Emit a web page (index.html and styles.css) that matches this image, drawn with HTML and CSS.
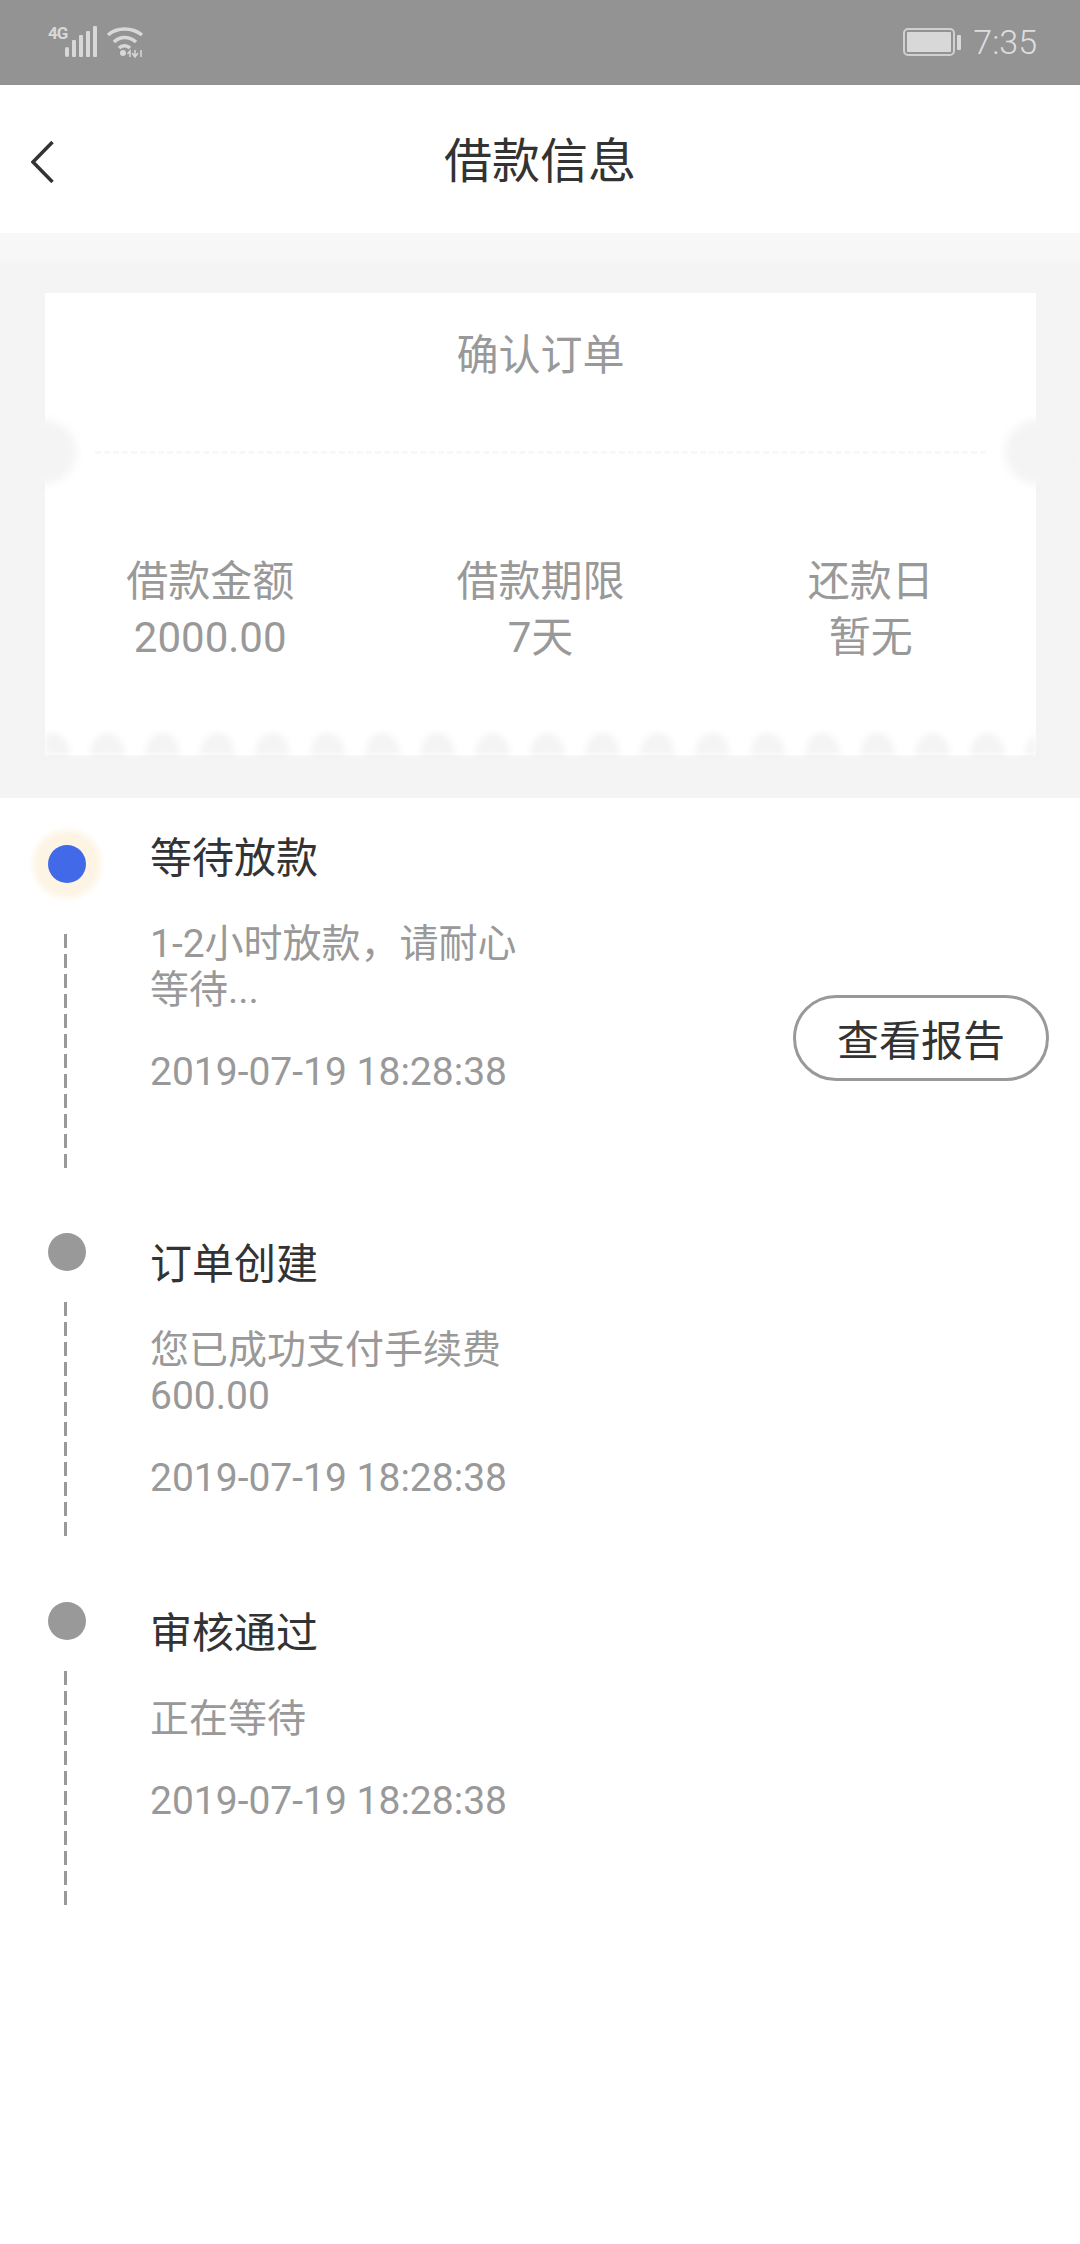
FILE: index.html
```html
<!DOCTYPE html>
<html lang="zh-CN">
<head>
<meta charset="utf-8">
<title>借款信息</title>
<link rel="stylesheet" href="styles.css">
</head>
<body>
<div class="status">
  <div class="status-left">
    <span class="net">4G</span>
    <svg class="signal" width="32" height="31" viewBox="0 0 32 31" aria-hidden="true">
      <rect x="0" y="21" width="4" height="10" rx="2"/>
      <rect x="7" y="14" width="4" height="17" rx="1"/>
      <rect x="14" y="9" width="4" height="22" rx="1"/>
      <rect x="21" y="5" width="4" height="26" rx="1"/>
      <rect x="28" y="0" width="4" height="31" rx="1"/>
    </svg>
    <svg class="wifi" width="38" height="32" viewBox="0 0 38 32" aria-hidden="true">
      <path class="arc" d="M2 9 C11 1 26 1 36 9"/>
      <path class="arc" d="M8 16 C14 10 23 10 30 16"/>
      <path class="arc" d="M13 22 C16 19 21 19 24 22"/>
      <circle class="spot" cx="17" cy="27" r="3"/>
      <path class="thin" d="M24 31 L24 25 L21.500 28 M29 24 L29 30 M26 27 L29 31 L32 27 M35 24 L35 31"/>
    </svg>
  </div>
  <div class="status-right">
    <svg class="battery" width="58" height="28" viewBox="0 0 58 28" aria-hidden="true">
      <rect class="shell" x="1" y="1" width="50" height="26" rx="4"/>
      <rect class="charge" x="4" y="4" width="44" height="20" rx="1"/>
      <rect class="charge" x="54" y="7" width="4" height="15" rx="1"/>
    </svg>
    <span class="clock">7:35</span>
  </div>
</div>

<header class="nav">
  <svg class="back" width="23" height="42" viewBox="0 0 23 42" aria-hidden="true">
    <path d="M21.500 1 L2 21 L21.500 41"/>
  </svg>
  <h1 class="nav-title">借款信息</h1>
</header>

<section class="ticket">
  <div class="ticket-card">
    <h2 class="ticket-title">确认订单</h2>
    <div class="perforation">
      <span class="notch notch-left"></span>
      <span class="perforation-line"></span>
      <span class="notch notch-right"></span>
    </div>
    <div class="facts">
      <div class="fact"><div>借款金额</div><div>2000.00</div></div>
      <div class="fact"><div>借款期限</div><div>7天</div></div>
      <div class="fact"><div>还款日</div><div>暂无</div></div>
    </div>
    <div class="scallops"></div>
  </div>
</section>

<main class="timeline">
  <article class="step step-active">
    <div class="marker">
      <span class="dot"></span>
      <span class="dash"></span>
    </div>
    <div class="step-body">
      <h3 class="step-title">等待放款</h3>
      <p class="step-text">1-2小时放款，请耐心等待...</p>
      <p class="step-time">2019-07-19 18:28:38</p>
    </div>
    <button class="report" type="button">查看报告</button>
  </article>
  <article class="step">
    <div class="marker">
      <span class="dot"></span>
      <span class="dash"></span>
    </div>
    <div class="step-body">
      <h3 class="step-title">订单创建</h3>
      <p class="step-text">您已成功支付手续费600.00</p>
      <p class="step-time">2019-07-19 18:28:38</p>
    </div>
  </article>
  <article class="step">
    <div class="marker">
      <span class="dot"></span>
      <span class="dash"></span>
    </div>
    <div class="step-body">
      <h3 class="step-title">审核通过</h3>
      <p class="step-text">正在等待</p>
      <p class="step-time">2019-07-19 18:28:38</p>
    </div>
  </article>
</main>
</body>
</html>
```
FILE: styles.css
```css
* { box-sizing: border-box; }

html, body {
  margin: 0;
  padding: 0;
  background: #fff;
  font-family: Roboto, "Noto Sans CJK SC", sans-serif;
  color: #333;
}

h1, h2, h3, p { margin: 0; font-weight: 400; }

/* status bar */
.status {
  height: 85px;
  background: #939393;
  color: #d8d8d8;
  display: flex;
  justify-content: space-between;
  padding: 26px 43px 0 48px;
}
.status-left { display: flex; align-items: flex-start; height: 33px; }
.net {
  font-size: 17px;
  line-height: 17px;
  font-weight: 700;
  margin-top: -1px;
  width: 17px;
  letter-spacing: -1px;
}
.signal { fill: #d8d8d8; }
.wifi { margin-left: 9px; }
.arc { fill: none; stroke: #d8d8d8; stroke-width: 3.500; }
.spot { fill: #d8d8d8; }
.thin { fill: none; stroke: #d8d8d8; stroke-width: 1.500; }
.status-right { display: flex; align-items: center; height: 32px; }
.battery { margin-right: 12px; }
.shell { fill: none; stroke: #d0d0d0; stroke-width: 2; }
.charge { fill: #d8d8d8; }
.clock { font-size: 34px; font-weight: 300; line-height: 32px; color: #dedede; }

/* nav */
.nav {
  height: 148px;
  display: grid;
  grid-template-columns: 1fr auto 1fr;
  align-items: center;
  padding: 5px 0 0 31px;
}
.back { fill: none; stroke: #333; stroke-width: 3.500; }
.nav-title { font-size: 48px; line-height: 60px; color: #333; grid-column: 2; margin-left: -31px; }

/* ticket */
.ticket {
  background: linear-gradient(#f8f8f8 0, #f6f6f6 28px, #f4f4f4 32px);
  padding: 60px 44px 43px 45px;
}
.ticket-card { background: #fff; padding-top: 33px; color: #999; }
.ticket-title { font-size: 42px; line-height: 60px; text-align: center; color: #999; }

.perforation {
  position: relative;
  height: 64px;
  margin-top: 34px;
  display: flex;
  align-items: center;
  padding: 0 50px;
}
.perforation-line { flex: 1; border-top: 3px dashed #f8f8f8; }
.notch {
  position: absolute;
  top: 0;
  width: 62px;
  height: 64px;
  border-radius: 50%;
  background: #f4f4f4;
  filter: blur(4px);
}
.notch-left { left: -31px; }
.notch-right { right: -31px; }

.facts {
  display: grid;
  grid-template-columns: repeat(3, 1fr);
  margin-top: 70px;
  text-align: center;
  font-size: 42px;
  line-height: 56px;
}

.scallops {
  height: 22px;
  margin-top: 67px;
  background-color: #fff;
  background-image: radial-gradient(ellipse 18px 23px at 50% 100%, #f4f4f4 92%, rgba(244, 244, 244, 0) 100%);
  background-size: 55px 22px;
  background-position: 35px 0;
  background-repeat: repeat-x;
  filter: blur(3px);
}

/* timeline */
.timeline { padding-top: 35px; }
.step { display: flex; align-items: flex-start; padding-bottom: 66px; }
.marker { width: 150px; padding-left: 48px; flex: none; display: flex; flex-direction: column; }
.dot { width: 38px; height: 38px; margin-top: -2px; border-radius: 50%; background: #999; }
.dash {
  width: 3px;
  height: 236px;
  margin: 31px 0 0 16px;
  background: repeating-linear-gradient(to bottom, #999 0, #999 14px, transparent 14px, transparent 20px);
}
.step-active .marker { padding-top: 14px; }
.step-active .dot { background: #4169e8; box-shadow: 0 0 6px 15px #fdf4e4; }
.step-active .dash { margin-top: 51px; height: 235px; }
.step-active .step-body { margin-top: -4px; }

.step-body { width: 374px; }
.step-title { font-size: 42px; line-height: 60px; color: #333; }
.step-text { margin-top: 32px; font-size: 39px; line-height: 46px; color: #999; }
.step-time { margin-top: 36px; font-size: 39px; line-height: 46px; color: #999; }

.report {
  margin: 162px 31px 0 auto;
  width: 256px;
  height: 86px;
  border: 3px solid #999;
  border-radius: 43px;
  background: #fff;
  color: #333;
  font-family: inherit;
  font-size: 42px;
  padding: 0 0 2px;
}
```
